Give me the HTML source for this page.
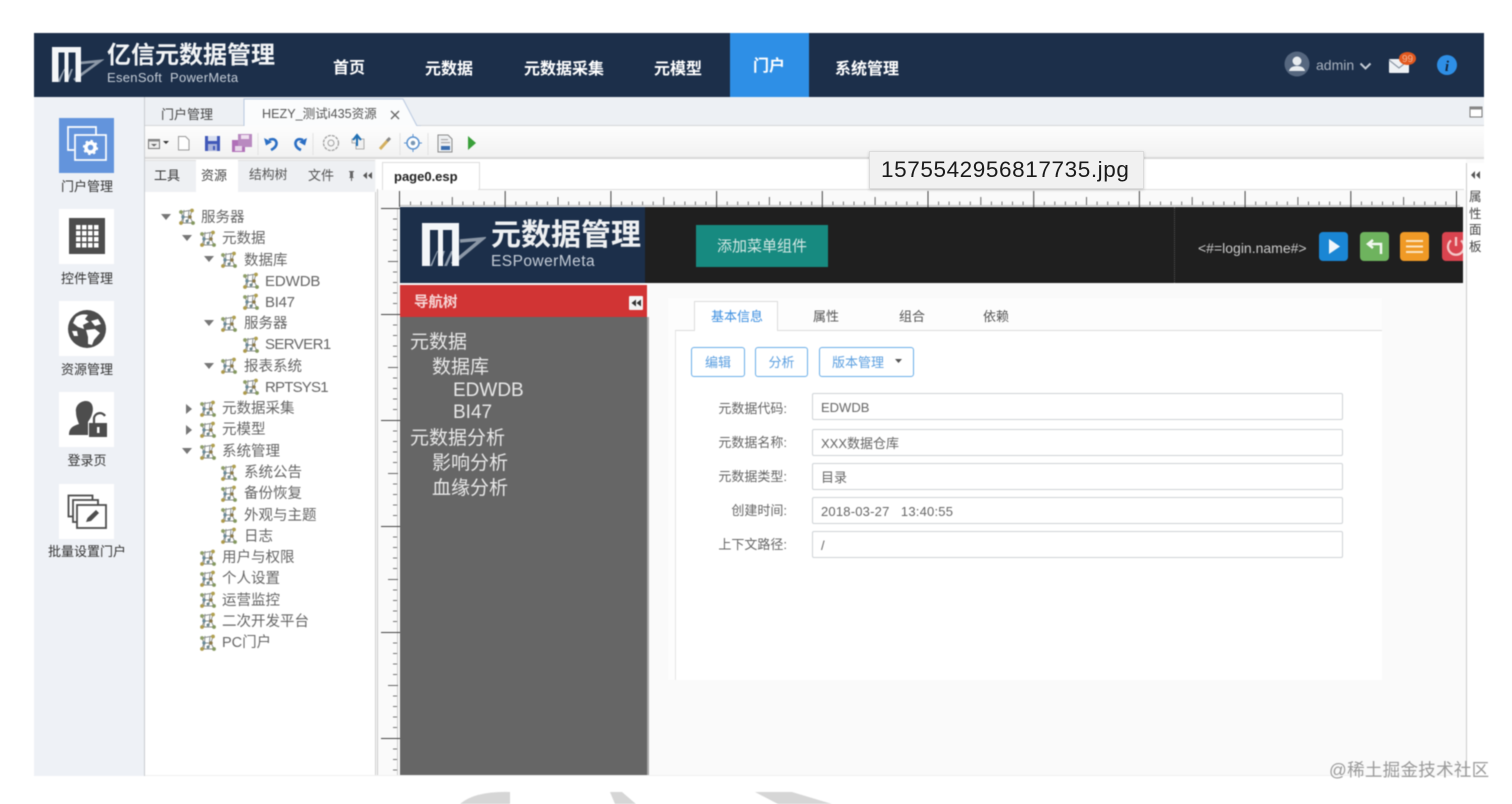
<!DOCTYPE html>
<html lang="zh"><head><meta charset="utf-8"><title>亿信元数据管理</title>
<style>
html,body{margin:0;padding:0;background:#fff;width:1512px;height:804px;overflow:hidden}
body{font-family:"Liberation Sans","Noto Sans CJK SC",sans-serif;position:relative}
#w{position:absolute;left:0;top:0;width:1512px;height:804px;overflow:hidden;filter:blur(.5px)}
.a,.t{position:absolute}
.t{white-space:nowrap;line-height:1}
.n{color:#fff;font-size:16px;font-weight:700;top:60px;transform:translateX(-50%)}
.s{width:106px;left:34px;text-align:center;font-size:13px;color:#333}
.ib{position:absolute;left:59px;width:55px;height:55px;background:#fff}
.tr{font-size:14.500px;color:#666;margin-top:1px}
.e{font-size:15px;letter-spacing:-.3px;margin-top:0}
.l{font-size:13px;color:#666;width:120px;text-align:right;left:667px}
.f{position:absolute;left:812px;width:529px;height:25px;border:1px solid #cfd3d6;border-radius:2px;background:#fff;font-size:13px;color:#666;line-height:27px;padding:0;text-indent:8px}
.b{position:absolute;top:347px;height:28px;border:1px solid #6aaee8;border-radius:3px;color:#5b9fe0;font-size:13px;line-height:29px;text-align:center;background:#fff}
.m{font-size:19px;color:#e8e8e8}
.sq{position:absolute;top:232px;width:29px;height:29px;border-radius:4px}
</style></head><body><div id="w">
<svg width="0" height="0" style="position:absolute"><defs>
<g id="ti" fill="none"><path d="M3 4 L14 2 L12 9 L15 15 L3 15 L5 9 Z M5 9 H12 M6 2 L5 15 M11 2 L10 14" stroke="#8a8f8e" stroke-width="1"/><circle cx="3" cy="4" r="1.900" fill="#8f9f68"/><circle cx="14" cy="2.500" r="1.900" fill="#b0a050"/><circle cx="5" cy="9" r="1.700" fill="#6a8a98"/><circle cx="12" cy="9" r="1.700" fill="#8c7a4a"/><circle cx="3" cy="15" r="1.900" fill="#ad9a4c"/><circle cx="15" cy="15" r="1.900" fill="#84985f"/><circle cx="9" cy="13" r="1.500" fill="#6d868d"/></g>
</defs></svg>

<!-- bottom watermark shapes -->
<svg class="a" style="left:440px;top:788px" width="420" height="16"><path d="M20 16 Q35 3 70 4 L70 16 Z M170 4 H182 L196 16 H175 Z M315 4 H352 L392 16 H338 Z" fill="#d6d6d6"/></svg>

<!-- app frame -->
<div class="a" style="left:34px;top:97px;width:1450px;height:679px;background:#fafafa"></div>
<!-- top nav -->
<div class="a" style="left:34px;top:33px;width:1450px;height:64px;background:#1c2f4a"></div>
<svg class="a" style="left:52px;top:47px" width="52" height="37"><path d="M5 35 L12 22 H13 L8 35ZM14 35 L19 22H21L16 35Z" fill="#8f9cac"/><path d="M22 33 L48 14 L28 16" fill="none" stroke="#8b97a6" stroke-width="2.800"/><path d="M0 0H29V35H23.500V5.500H16.500V35H12.500V5.500H6.500V35H0Z" fill="#f4f6f8"/></svg>
<div class="t" style="left:107px;top:44px;font-size:24px;font-weight:700;color:#f2f4f6">亿信元数据管理</div>
<div class="t" style="left:107px;top:71px;font-size:13px;color:#c4ccd6;letter-spacing:.3px">EsenSoft&nbsp; PowerMeta</div>
<div class="t n" style="left:349px;top:61px">首页</div>
<div class="t n" style="left:449px;top:62px">元数据</div>
<div class="t n" style="left:564px;top:62px">元数据采集</div>
<div class="t n" style="left:678px;top:62px">元模型</div>
<div class="a" style="left:730px;top:33px;width:79px;height:64px;background:#2e8fe6"></div>
<div class="t n" style="left:769px;top:59px">门户</div>
<div class="t n" style="left:867px;top:62px">系统管理</div>
<svg class="a" style="left:1284px;top:51px" width="26" height="26"><circle cx="13" cy="13" r="12.500" fill="#56677f"/><circle cx="13" cy="10" r="4.500" fill="#e8ecef"/><path d="M5 20 Q6 15 13 15 Q20 15 21 20 Z" fill="#e8ecef"/></svg>
<div class="t" style="left:1316px;top:58px;font-size:14px;color:#a8b1be">admin</div>
<svg class="a" style="left:1359px;top:62px" width="13" height="9"><path d="M1.500 1.500 L6.500 6.500 L11.500 1.500" fill="none" stroke="#c5ccd5" stroke-width="2"/></svg>
<svg class="a" style="left:1388px;top:51px" width="30" height="24"><rect x="1" y="8" width="20" height="14" rx="1" fill="#eef1f4"/><path d="M1 9 L11 17 L21 9" fill="none" stroke="#8c97a5" stroke-width="1.200"/><ellipse cx="19.500" cy="7.500" rx="8.500" ry="6.500" fill="#e2581e"/><text x="19.500" y="11" text-anchor="middle" font-size="10" fill="#f0b090">99</text></svg>
<svg class="a" style="left:1437px;top:55px" width="20" height="20"><circle cx="10" cy="10" r="10" fill="#2e8fe6"/><text x="10" y="16" text-anchor="middle" font-size="15" font-weight="700" font-style="italic" font-family="Liberation Serif" fill="#12263f">i</text></svg>

<!-- left icon sidebar -->
<div class="a" style="left:34px;top:97px;width:110px;height:679px;background:#eef1f6;border-right:1px solid #c9ccd0"></div>
<div class="ib" style="top:118px;background:#6394dc"></div>
<svg class="a" style="left:66px;top:126px" width="42" height="40" fill="none" stroke="#fff" stroke-width="1.700"><path d="M8 24H2V1H30V9"/><rect x="9" y="9" width="31" height="25"/><circle cx="24.500" cy="21.500" r="4.500" stroke-width="3.500"/><circle cx="24.500" cy="21.500" r="6.800" stroke-width="1.600" stroke-dasharray="2.500 2.800"/></svg>
<div class="t s" style="top:180px">门户管理</div>
<div class="ib" style="top:209px"></div>
<svg class="a" style="left:69px;top:218px" width="36" height="36"><rect width="36" height="36" fill="#4d4d4d"/><g fill="#fff"><rect x="7" y="7" width="4.500" height="4.500"/><rect x="13" y="7" width="4.500" height="4.500"/><rect x="19" y="7" width="4.500" height="4.500"/><rect x="25" y="7" width="4.500" height="4.500"/><rect x="7" y="13" width="4.500" height="4.500"/><rect x="13" y="13" width="4.500" height="4.500"/><rect x="19" y="13" width="4.500" height="4.500"/><rect x="25" y="13" width="4.500" height="4.500"/><rect x="7" y="19" width="4.500" height="4.500"/><rect x="13" y="19" width="4.500" height="4.500"/><rect x="19" y="19" width="4.500" height="4.500"/><rect x="25" y="19" width="4.500" height="4.500"/><rect x="7" y="25" width="4.500" height="4.500"/><rect x="13" y="25" width="4.500" height="4.500"/><rect x="19" y="25" width="4.500" height="4.500"/><rect x="25" y="25" width="4.500" height="4.500"/></g></svg>
<div class="t s" style="top:272px">控件管理</div>
<div class="ib" style="top:301px"></div>
<svg class="a" style="left:68px;top:310px" width="38" height="38"><circle cx="19" cy="19" r="19" fill="#4d4d4d"/><path d="M8 7 Q14 3 20 5 L17 9 L21 12 L15 15 L16 19 L10 17 L5 13 Z M23 11 L30 9 L33 14 L27 16 Z M18 20 L27 19 L32 23 L26 30 L24 35 L20 34 L20 27 Z M4 21 L9 21 L10 26 L6 26 Z" fill="#fff"/></svg>
<div class="t s" style="top:363px">资源管理</div>
<div class="ib" style="top:392px"></div>
<svg class="a" style="left:68px;top:400px" width="40" height="38"><path d="M18 1 C25 1 26 9 24 14 C23 18 21 20 20 22 L20 35 H1 C1 28 5 26 11 24 C10 21 8 17 8 12 C7 6 12 1 18 1Z" fill="#4d4d4d"/><path d="M26 23 V18 A6 6 0 0 1 37 16" fill="none" stroke="#4d4d4d" stroke-width="2.200"/><rect x="21" y="23" width="18" height="14" fill="#4d4d4d"/><rect x="29" y="27" width="2.500" height="6" fill="#fff"/></svg>
<div class="t s" style="top:454px">登录页</div>
<div class="ib" style="top:484px"></div>
<svg class="a" style="left:67px;top:494px" width="40" height="36" fill="#fff" stroke="#4d4d4d" stroke-width="1.800"><rect x="1.500" y="1.500" width="24" height="21"/><rect x="6" y="6" width="25" height="22"/><rect x="10" y="11" width="29" height="23"/><path d="M19 28 L20.500 24 L29 16 L32 19 L24 27 Z" fill="#4d4d4d" stroke="none"/></svg>
<div class="t s" style="top:545px">批量设置门户</div>

<!-- tab bar -->
<div class="a" style="left:145px;top:97px;width:1339px;height:29px;background:#edf0f4;border-bottom:1px solid #d4d6d8;box-sizing:border-box"></div>
<div class="t" style="left:161px;top:108px;font-size:13px;color:#444">门户管理</div>
<svg class="a" style="left:243px;top:98px" width="178" height="29"><path d="M1 29 V1 H160 L174 28 H178 V29Z" fill="#fbfcfd" stroke="#b8c8e0" stroke-width="1"/><path d="M0 29 H178" stroke="#fbfcfd" stroke-width="2"/></svg>
<div class="t" style="left:262px;top:108px;font-size:12.600px;color:#555">HEZY_测试i435资源</div>
<svg class="a" style="left:390px;top:110px" width="10" height="10"><path d="M1 1L9 9M9 1L1 9" stroke="#666" stroke-width="1.300"/></svg>
<svg class="a" style="left:1469px;top:105px" width="15" height="14" fill="none"><rect x="1" y="2" width="12" height="10" stroke="#777" fill="#fff"/><rect x="1" y="2" width="12" height="2.500" fill="#888"/></svg>

<!-- toolbar -->
<div class="a" style="left:145px;top:126px;width:1339px;height:33px;background:linear-gradient(#fdfdfd,#f2f2f2);border-bottom:2px solid #d8d8d8;box-sizing:border-box"></div>
<svg class="a" style="left:145px;top:130px" width="340" height="28">
<rect x="3.500" y="9.500" width="11" height="9" fill="#eee" stroke="#777"/><rect x="3.500" y="9.500" width="11" height="2" fill="#888"/><path d="M6 14h6l-3 2.500z" fill="#666"/><path d="M18 11h6l-3 3z" fill="#333"/>
<path d="M33.500 6.500h7l3.500 3.500v10H33.500Z" fill="#fff" stroke="#999"/>
<rect x="60" y="6" width="15" height="15" fill="#4058b8"/><rect x="63" y="6" width="9" height="5" fill="#d8dff0"/><rect x="63" y="14" width="9" height="7" fill="#aab4dc"/><rect x="68" y="16" width="2" height="4" fill="#4058b8"/>
<rect x="87" y="10" width="13" height="12" fill="#b070b8"/><rect x="93" y="4" width="14" height="13" fill="#b98ac0"/><rect x="96" y="5" width="8" height="4" fill="#efe0f0"/><rect x="90" y="16" width="7" height="5" fill="#e8d8ea"/>
<path d="M126 20 Q132 17 131.500 12.500 Q130 7.500 124 10" fill="none" stroke="#2c6fc4" stroke-width="2.600"/><path d="M119 8 L121 15.500 L127 12Z" fill="#2c6fc4"/>
<path d="M156 20 Q150 17.500 150.500 12.500 Q152 7.500 158 10" fill="none" stroke="#2c6fc4" stroke-width="2.600"/><path d="M162 8 L160 15.500 L154 12Z" fill="#2c6fc4"/>
<circle cx="186" cy="13" r="7.500" fill="none" stroke="#a0a0a0" stroke-width="1.300" stroke-dasharray="3 1"/><circle cx="186" cy="13" r="3" fill="none" stroke="#a0a0a0"/>
<path d="M207 9 H219 V19 H211 V13 H207Z" fill="#f0f0f0" stroke="#999" stroke-width=".8"/><path d="M212 16 V6 M208 10 L212 5 L216 10" fill="none" stroke="#1e6fb4" stroke-width="2"/>
<path d="M235 19 L244 9" stroke="#d4b060" stroke-width="3"/><path d="M242 11 L245 8" stroke="#888" stroke-width="3"/>
<circle cx="268" cy="13" r="6" fill="#fff" stroke="#5c93d0" stroke-width="1.500"/><circle cx="268" cy="13" r="2.300" fill="#7a97b4"/><path d="M268 4V7M268 19V22M259 13H262M274 13H277" stroke="#5c93d0"/>
<path d="M293 5H303L307 9V22H293Z" fill="#eef0f2" stroke="#8a8a8a"/><rect x="296" y="16" width="9" height="4" fill="#3c6fb0"/><rect x="296" y="9" width="7" height="1.200" fill="#aaa"/><rect x="296" y="12" width="9" height="1.200" fill="#aaa"/>
<path d="M323 6 L331 13 L323 20Z" fill="#3aa03a"/>
<path d="M168 3V25M255 3 V25M283 3V25" stroke="#e2e2e2"/><path d="M113 3V25" stroke="#e2e2e2"/>
</svg>

<!-- left tree panel -->
<div class="a" style="left:145px;top:160px;width:230px;height:32px;background:#eef0f3"></div>
<div class="a" style="left:145px;top:192px;width:230px;height:584px;background:#fff;border-right:1px solid #cfcfcf"></div>
<div class="a" style="left:145px;top:160px;width:230px;height:1px;background:#e0e0e0"></div>
<div class="a" style="left:196px;top:160px;width:42px;height:32px;background:#fff"></div>
<div class="t" style="left:154px;top:169px;font-size:13px;color:#333">工具</div>
<div class="t" style="left:201px;top:169px;font-size:13px;color:#444">资源</div>
<div class="t" style="left:249px;top:169px;font-size:12.800px;color:#555">结构树</div>
<div class="t" style="left:308px;top:169px;font-size:13px;color:#555">文件</div>
<svg class="a" style="left:345px;top:170px" width="30" height="12"><path d="M4 1h5v1h-1v5l1 1H4l1-1V2H4zM6 8h1v3H6z" fill="#666"/><path d="M22 2v7l-4-3.500zM27 2v7l-4-3.500z" fill="#555"/></svg>

<!-- tree -->
<svg class="a" style="left:145px;top:200px" width="230" height="460">
<g fill="#777"><path d="M16 14h10l-5 6z"/><path d="M37 35h10l-5 6z"/><path d="M59 56h10l-5 6z"/><path d="M59 120h10l-5 6z"/><path d="M59 163h10l-5 6z"/><path d="M41 204v10l6-5z"/><path d="M41 225v10l6-5z"/><path d="M37 248h10l-5 6z"/></g>
<use href="#ti" x="33" y="8"/><use href="#ti" x="54" y="30"/><use href="#ti" x="75" y="51"/><use href="#ti" x="97" y="72"/><use href="#ti" x="97" y="93"/><use href="#ti" x="75" y="115"/><use href="#ti" x="97" y="136"/><use href="#ti" x="75" y="157"/><use href="#ti" x="97" y="178"/><use href="#ti" x="54" y="200"/><use href="#ti" x="54" y="221"/><use href="#ti" x="54" y="243"/><use href="#ti" x="75" y="264"/><use href="#ti" x="75" y="285"/><use href="#ti" x="75" y="306"/><use href="#ti" x="75" y="327"/><use href="#ti" x="54" y="349"/><use href="#ti" x="54" y="370"/><use href="#ti" x="54" y="391"/><use href="#ti" x="54" y="412"/><use href="#ti" x="54" y="434"/>
</svg>
<div class="t tr" style="left:201px;top:210px">服务器</div>
<div class="t tr" style="left:222px;top:231px">元数据</div>
<div class="t tr" style="left:244px;top:253px">数据库</div>
<div class="t tr e" style="left:265px;top:274px;letter-spacing:-.1px">EDWDB</div>
<div class="t tr e" style="left:265px;top:295px">BI47</div>
<div class="t tr" style="left:244px;top:316px">服务器</div>
<div class="t tr e" style="left:265px;top:337px;letter-spacing:-.6px">SERVER1</div>
<div class="t tr" style="left:244px;top:359px">报表系统</div>
<div class="t tr e" style="left:265px;top:380px;letter-spacing:-.8px">RPTSYS1</div>
<div class="t tr" style="left:222px;top:401px">元数据采集</div>
<div class="t tr" style="left:222px;top:422px">元模型</div>
<div class="t tr" style="left:222px;top:444px">系统管理</div>
<div class="t tr" style="left:244px;top:465px">系统公告</div>
<div class="t tr" style="left:244px;top:486px">备份恢复</div>
<div class="t tr" style="left:244px;top:508px">外观与主题</div>
<div class="t tr" style="left:244px;top:529px">日志</div>
<div class="t tr" style="left:222px;top:550px">用户与权限</div>
<div class="t tr" style="left:222px;top:571px">个人设置</div>
<div class="t tr" style="left:222px;top:593px">运营监控</div>
<div class="t tr" style="left:222px;top:614px">二次开发平台</div>
<div class="t tr" style="left:222px;top:635px">PC门户</div>

<!-- editor -->
<div class="a" style="left:376px;top:159px;width:1090px;height:31px;background:#fff"></div>
<div class="a" style="left:382px;top:162px;width:96px;height:27px;background:#fff;border:1px solid #ddd;border-bottom:none"></div>
<div class="t" style="left:394px;top:170px;font-size:13px;font-weight:700;color:#222">page0.esp</div>
<div class="a" style="left:478px;top:189px;width:986px;height:1px;background:#ddd"></div>
<div class="a" style="left:380px;top:190px;width:1084px;height:17px;background:#fafafa"></div>
<div class="a" style="left:380px;top:207px;width:20px;height:569px;background:#fafafa"></div>
<div class="a" style="left:377px;top:189px;width:1px;height:587px;background:#ccc"></div>
<svg class="a" style="left:376px;top:186px" width="1090" height="590">
<g transform="translate(-376,-186)">
<path d="M400 205.500H1460" stroke="#bbb"/>
<path d="M397.500 208V776" stroke="#ccc"/>
<g stroke="#777"><path d="M410.500 201.500V205M421 201.500V205M431.600 201.500V205M442.200 201.500V205M462.900 201.500V205M473.500 201.500V205M484.100 201.500V205M494.600 201.500V205M515.800 201.500V205M526.400 201.500V205M536.900 201.500V205M547.500 201.500V205M568.600 201.500V205M579.200 201.500V205M589.700 201.500V205M600.300 201.500V205M621.500 201.500V205M632 201.500V205M642.600 201.500V205M653.200 201.500V205M674.300 201.500V205M684.900 201.500V205M695.400 201.500V205M706 201.500V205M727.200 201.500V205M737.700 201.500V205M748.300 201.500V205M758.900 201.500V205M780 201.500V205M790.600 201.500V205M801.100 201.500V205M811.700 201.500V205M832.900 201.500V205M843.400 201.500V205M854 201.500V205M864.600 201.500V205M885.700 201.500V205M896.300 201.500V205M906.800 201.500V205M917.400 201.500V205M938.600 201.500V205M949.100 201.500V205M959.700 201.500V205M970.300 201.500V205M991.400 201.500V205M1002 201.500V205M1012.500 201.500V205M1023.100 201.500V205M1044.300 201.500V205M1054.800 201.500V205M1065.400 201.500V205M1076 201.500V205M1097.100 201.500V205M1107.700 201.500V205M1118.200 201.500V205M1128.800 201.500V205M1150 201.500V205M1160.500 201.500V205M1171.100 201.500V205M1181.700 201.500V205M1202.800 201.500V205M1213.400 201.500V205M1223.900 201.500V205M1234.500 201.500V205M1255.700 201.500V205M1266.200 201.500V205M1276.800 201.500V205M1287.400 201.500V205M1308.500 201.500V205M1319.100 201.500V205M1329.600 201.500V205M1340.200 201.500V205M1361.400 201.500V205M1371.900 201.500V205M1382.500 201.500V205M1393.100 201.500V205M1414.200 201.500V205M1424.800 201.500V205M1435.300 201.500V205M1445.900 201.500V205"/></g>
<path d="M399.500 191V207M505.200 191V207M610.900 191V207M716.600 191V207M822.300 191V207M928 191V207M1033.700 191V207M1139.400 191V207M1245.100 191V207M1350.800 191V207M1456.500 191V207" stroke="#444"/>
<path d="M452.300 197V205M558 197V205M663.700 197V205M769.400 197V205M875.100 197V205M980.800 197V205M1086.500 197V205M1192.200 197V205M1297.900 197V205M1403.600 197V205" stroke="#666"/>
<path d="M381 208.500H400M381 314.500H400M381 420.500H400M381 526.500H400M381 632.500H400M381 738.500H400" stroke="#444"/>
<path d="M388 261.500H398M388 367.500H398M388 473.500H398M388 579.500H398M388 685.500H398" stroke="#666"/>
<g stroke="#777"><path d="M393 219H397M393 229.500H397M393 240H397M393 250.500H397M393 272H397M393 282.500H397M393 293H397M393 303.500H397M393 325H397M393 335.500H397M393 346H397M393 356.500H397M393 378H397M393 388.500H397M393 399H397M393 409.500H397M393 431H397M393 441.500H397M393 452H397M393 462.500H397M393 484H397M393 494.500H397M393 505H397M393 515.500H397M393 537H397M393 547.500H397M393 558H397M393 568.500H397M393 590H397M393 600.500H397M393 611H397M393 621.500H397M393 643H397M393 653.500H397M393 664H397M393 674.500H397M393 696H397M393 706.500H397M393 717H397M393 727.500H397M393 749H397M393 759.500H397M393 770H397"/></g>
</g></svg>

<!-- canvas -->
<div class="a" style="left:400px;top:207px;width:1063px;height:76px;background:#1f1f1f"></div>
<div class="a" style="left:400px;top:207px;width:245px;height:76px;background:#1c2f4a"></div>
<svg class="a" style="left:422px;top:223px" width="64" height="46"><path d="M8 43 L15 28 H16 L10 43ZM16 43 L21 28H23L18 43ZM22 43 L29 28H30V31L25 43Z" fill="#8f9cac"/><path d="M30 41 L60 16 L38 18" fill="none" stroke="#8b97a6" stroke-width="3.500"/><path d="M0 0H37V43H30V7H21V43H16V7H8V43H0Z" fill="#f4f6f8"/></svg>
<div class="t" style="left:491px;top:221px;font-size:30px;font-weight:700;color:#eef0f2">元数据管理</div>
<div class="t" style="left:491px;top:254px;font-size:15.500px;color:#c4ccd6;letter-spacing:.45px">ESPowerMeta</div>
<div class="a" style="left:696px;top:225px;width:132px;height:42px;background:#178a80"></div>
<div class="t" style="left:696px;top:239px;width:132px;text-align:center;font-size:15px;color:#d4e8e4">添加菜单组件</div>
<div class="a" style="left:1174px;top:207px;width:1px;height:76px;border-left:1px dotted #555"></div>
<div class="t" style="left:1198px;top:241px;font-size:14px;color:#c8c8c8">&lt;#=login.name#&gt;</div>
<div class="sq" style="left:1319px;background:#1a86d4"></div>
<svg class="a" style="left:1319px;top:232px" width="29" height="29"><path d="M10 7 L21 14.500 L10 22Z" fill="#f0f6fb"/></svg>
<div class="sq" style="left:1360px;background:#6eb35e"></div>
<svg class="a" style="left:1360px;top:232px" width="29" height="29"><path d="M21 22V12H9M13 8L8 12L13 16" fill="none" stroke="#f2f8f0" stroke-width="2.500"/></svg>
<div class="sq" style="left:1400px;background:#f09a26"></div>
<svg class="a" style="left:1400px;top:232px" width="29" height="29"><path d="M6 9H23M6 14.500H23M6 20H23" stroke="#fbe4c0" stroke-width="2"/></svg>
<div class="a" style="left:1442px;top:232px;width:21px;height:29px;background:#d9444f;border-radius:4px 0 0 4px;overflow:hidden"><svg width="29" height="29"><path d="M9 8.500A8 8 0 1 0 19 8.500M14 5V14" fill="none" stroke="#f4c8c8" stroke-width="2.300"/></svg></div>

<!-- nav tree block -->
<div class="a" style="left:400px;top:285px;width:247px;height:32px;background:#d13434"></div>
<div class="t" style="left:414px;top:296px;font-size:14.500px;font-weight:700;color:#f6d6d6">导航树</div>
<svg class="a" style="left:629px;top:296px" width="14" height="14"><rect width="14" height="14" rx="1" fill="#f4f4f4"/><path d="M7 3.500v7L2.500 7zM12 3.500v7L7.500 7z" fill="#333"/></svg>
<div class="a" style="left:400px;top:317px;width:247px;height:459px;background:#666;border-right:2px solid #a6a6a6"></div>
<div class="t m" style="left:410px;top:333px">元数据</div>
<div class="t m" style="left:432px;top:358px">数据库</div>
<div class="t m" style="left:453px;top:381px">EDWDB</div>
<div class="t m" style="left:453px;top:403px">BI47</div>
<div class="t m" style="left:410px;top:429px">元数据分析</div>
<div class="t m" style="left:432px;top:454px">影响分析</div>
<div class="t m" style="left:432px;top:479px">血缘分析</div>

<!-- content panel -->
<div class="a" style="left:668px;top:298px;width:714px;height:382px;background:#fdfdfd"></div>
<div class="a" style="left:675px;top:330px;width:707px;height:350px;background:#fff;border-left:1px solid #e4e4e4;box-sizing:border-box"></div>
<div class="a" style="left:675px;top:330px;width:707px;height:1px;background:#ddd"></div>
<div class="a" style="left:694px;top:301px;width:84px;height:30px;background:#fff;border:1px solid #ddd;border-bottom:none;box-sizing:border-box"></div>
<div class="t" style="left:711px;top:310px;font-size:13px;color:#3d8fe0">基本信息</div>
<div class="t" style="left:813px;top:310px;font-size:13px;color:#555">属性</div>
<div class="t" style="left:899px;top:310px;font-size:13px;color:#555">组合</div>
<div class="t" style="left:983px;top:310px;font-size:13px;color:#555">依赖</div>
<div class="b" style="left:691px;width:52px">编辑</div>
<div class="b" style="left:755px;width:51px">分析</div>
<div class="b" style="left:819px;width:93px"><span style="position:absolute;left:12px">版本管理</span></div>
<svg class="a" style="left:894px;top:359px" width="10" height="6"><path d="M1 0h7L4.500 4z" fill="#555"/></svg>
<div class="t l" style="top:402px">元数据代码:</div>
<div class="t l" style="top:436px">元数据名称:</div>
<div class="t l" style="top:470px">元数据类型:</div>
<div class="t l" style="top:504px">创建时间:</div>
<div class="t l" style="top:538px">上下文路径:</div>
<div class="f" style="top:393px">EDWDB</div>
<div class="f" style="top:429px">XXX数据仓库</div>
<div class="f" style="top:463px">目录</div>
<div class="f" style="top:497px;letter-spacing:.2px">2018-03-27&nbsp;&nbsp; 13:40:55</div>
<div class="f" style="top:531px">/</div>

<!-- right collapsed panel -->
<div class="a" style="left:1466px;top:163px;width:18px;height:613px;background:#fff;border-left:1px solid #ccc;box-sizing:border-box"></div>
<svg class="a" style="left:1470px;top:170px" width="12" height="10"><path d="M5 1v8L1 5zM10 1v8L6 5z" fill="#555"/></svg>
<div class="t" style="left:1469px;top:189px;font-size:12.500px;color:#444;line-height:16.500px;white-space:normal;width:14px">属性面板</div>
<div class="a" style="left:145px;top:775px;width:1321px;height:1px;background:#f0f0f0"></div>

<!-- watermark -->
<div class="t" style="left:1329px;top:762px;font-size:17.500px;color:#9a9a9a;letter-spacing:.3px">@稀土掘金技术社区</div>
</div>
<!-- tooltip -->
<div class="t" style="left:869px;top:151px;width:275px;height:38px;box-sizing:border-box;background:#f1f1f1;border:1px solid #dcdcdc;box-shadow:0 1px 3px rgba(0,0,0,.18);font-size:22.500px;line-height:36px;color:#1a1a1a;padding-left:11px;letter-spacing:.6px">1575542956817735.jpg</div>
</body></html>
